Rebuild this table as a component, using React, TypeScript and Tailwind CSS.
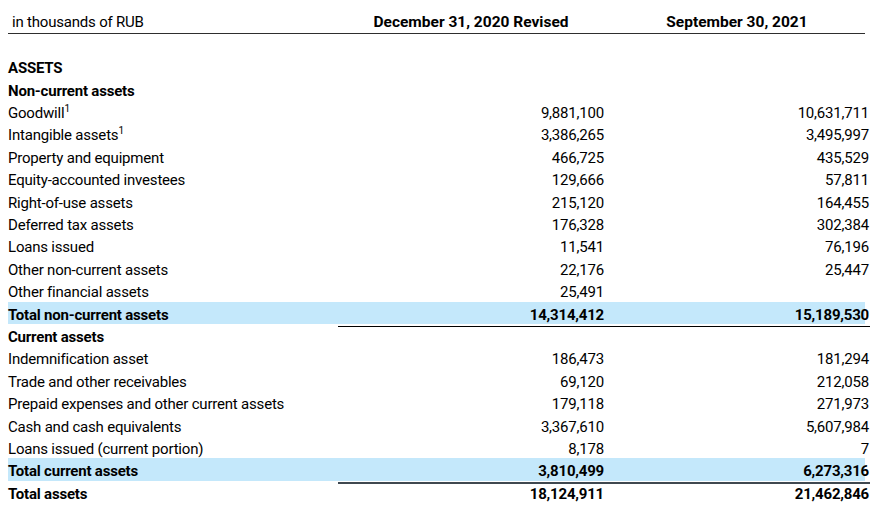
type Row = {
  label: string;
  sup?: boolean;
  a?: string;
  b?: string;
  bold?: boolean;
  total?: "single" | "double";
};

const rows: Row[] = [
  { label: "ASSETS", bold: true },
  { label: "Non-current assets", bold: true },
  { label: "Goodwill", sup: true, a: "9,881,100", b: "10,631,711" },
  { label: "Intangible assets", sup: true, a: "3,386,265", b: "3,495,997" },
  { label: "Property and equipment", a: "466,725", b: "435,529" },
  { label: "Equity-accounted investees", a: "129,666", b: "57,811" },
  { label: "Right-of-use assets", a: "215,120", b: "164,455" },
  { label: "Deferred tax assets", a: "176,328", b: "302,384" },
  { label: "Loans issued", a: "11,541", b: "76,196" },
  { label: "Other non-current assets", a: "22,176", b: "25,447" },
  { label: "Other financial assets", a: "25,491" },
  { label: "Total non-current assets", a: "14,314,412", b: "15,189,530", bold: true, total: "single" },
  { label: "Current assets", bold: true },
  { label: "Indemnification asset", a: "186,473", b: "181,294" },
  { label: "Trade and other receivables", a: "69,120", b: "212,058" },
  { label: "Prepaid expenses and other current assets", a: "179,118", b: "271,973" },
  { label: "Cash and cash equivalents", a: "3,367,610", b: "5,607,984" },
  { label: "Loans issued (current portion)", a: "8,178", b: "7" },
  { label: "Total current assets", a: "3,810,499", b: "6,273,316", bold: true, total: "double" },
  { label: "Total assets", a: "18,124,911", b: "21,462,846", bold: true },
];

export default function App() {
  return (
    <div
      className="w-[873px] h-[508px] bg-white text-black px-2 overflow-hidden"
      style={{ fontFamily: "Roboto, 'Liberation Sans', sans-serif" }}
    >
      {/* column headers */}
      <div className="grid grid-cols-[330px_266px_266px] h-[34px] border-b-[1.5px] border-[#2e2e2e] items-end pb-[1px]">
        <div className="pl-1 text-[15px] leading-[20px] tracking-[-0.2px]">in thousands of RUB</div>
        <div className="text-center font-bold text-[15.5px] leading-[20px]">December 31, 2020 Revised</div>
        <div className="text-center font-bold text-[15.5px] leading-[20px]">September 30, 2021</div>
      </div>

      <div className="h-[21.3px]" />

      <div className="flex flex-col tracking-[-0.2px]">
        {rows.map((r) => (
          <div
            key={r.label}
            className={`grid grid-cols-[330px_532px] h-[22.4px] text-[15px] leading-[22px] ${
              r.total ? "bg-[#c4e8fb]" : ""
            } ${r.bold ? "font-bold" : ""}`}
          >
            <div className="whitespace-nowrap pt-[2px]">
              {r.label}
              {r.sup && (
                <span className="text-[10px] font-normal relative -top-[6px] leading-none">1</span>
              )}
            </div>
            <div
              className={`grid grid-cols-[266px_266px] ${
                r.total === "single"
                  ? "border-b-[1.5px] border-black"
                  : r.total === "double"
                  ? "border-b-2 border-[#3f4850]"
                  : ""
              }`}
            >
              <div className="text-right pt-[2px]">{r.a}</div>
              <div className="text-right pr-[1px] pt-[2px]">{r.b}</div>
            </div>
          </div>
        ))}
      </div>
    </div>
  );
}
